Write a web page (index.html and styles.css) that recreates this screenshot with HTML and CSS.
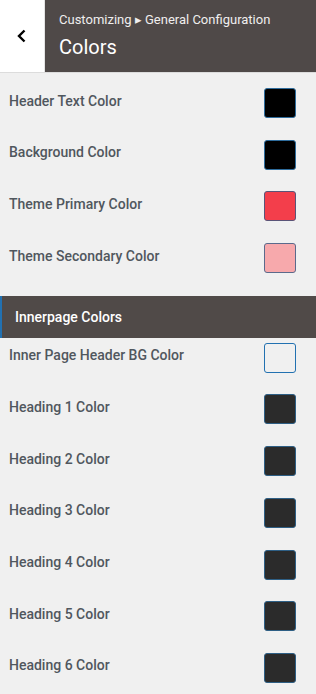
FILE: index.html
```html
<!DOCTYPE html>
<html lang="en">
<head>
    <meta charset="UTF-8">
    <meta name="viewport" content="width=device-width, initial-scale=1.0">
    <title>Colors</title>
    <link rel="stylesheet" href="styles.css">
</head>
<body>

    <!-- Panel header -->
    <div class="panel-head">
        <button type="button" class="back" aria-label="Back">
            <svg width="12" height="14" viewBox="0 0 12 14"><path d="M8.5 1.5 L3 7 L8.5 12.5" fill="none" stroke="#000" stroke-width="2.4"/></svg>
        </button>
        <div class="title">
            <span class="crumb">Customizing &#9656; General Configuration</span>
            <h1>Colors</h1>
        </div>
    </div>

    <div class="controls">
        <div class="row"><span class="label">Header Text Color</span><span class="swatch black"></span></div>
        <div class="row"><span class="label">Background Color</span><span class="swatch black"></span></div>
        <div class="row"><span class="label">Theme Primary Color</span><span class="swatch primary"></span></div>
        <div class="row"><span class="label">Theme Secondary Color</span><span class="swatch secondary"></span></div>

        <!-- Inner page group -->
        <h3 class="section">Innerpage Colors</h3>

        <div class="row first"><span class="label">Inner Page Header BG Color</span><span class="swatch empty"></span></div>
        <div class="row"><span class="label">Heading 1 Color</span><span class="swatch dark"></span></div>
        <div class="row"><span class="label">Heading 2 Color</span><span class="swatch dark"></span></div>
        <div class="row"><span class="label">Heading 3 Color</span><span class="swatch dark"></span></div>
        <div class="row"><span class="label">Heading 4 Color</span><span class="swatch dark"></span></div>
        <div class="row"><span class="label">Heading 5 Color</span><span class="swatch dark"></span></div>
        <div class="row"><span class="label">Heading 6 Color</span><span class="swatch dark"></span></div>
    </div>

</body>
</html>
```

FILE: styles.css
```css
body {
    margin: 0;
    background: #f0f0f0;
    font-family: Roboto, "Liberation Sans", sans-serif;
}

.panel-head {
    display: flex;
    height: 72px;
    border-bottom: 1px solid #dcdcdc;
}

.back {
    width: 45px;
    border: none;
    border-right: 1px solid #e4e4e4;
    background: #fff;
    padding: 0;
    display: flex;
    align-items: center;
    justify-content: center;
}

.title {
    flex: 1;
    background: #4f4948;
    padding: 12px 0 0 14px;
    color: #fff;
}

.crumb {
    display: block;
    font-size: 13px;
    line-height: 16px;
    color: #f0eeee;
}

.title h1 {
    margin: 7px 0 0;
    font-size: 20px;
    font-weight: 400;
    line-height: 24px;
}

.controls {
    padding: 15px 20px 0 9px;
}

.row {
    display: flex;
    align-items: center;
    justify-content: space-between;
    height: 30px;
    margin-bottom: 21.7px;
}

.label {
    font-size: 14px;
    font-weight: 500;
    color: #50575e;
    padding-bottom: 5px;
}

.swatch {
    width: 30px;
    height: 28px;
    border: 1px solid #2e6c9c;
    border-radius: 3px;
}

.black { background: #000; }
.primary { background: #f33e4b; border-color: #5a5478; }
.secondary { background: #f7a9ac; border-color: #5b6a8c; }
.empty { background: #f0f0f0; border-color: #2271b1; }
.dark { background: #2b2b2b; border-color: #2e5f85; }

.section {
    margin: 0 -20px 6px -9px;
    height: 42px;
    line-height: 42px;
    padding-left: 13px;
    background: #504a48;
    border-left: 2px solid #2271b1;
    color: #fff;
    font-size: 14px;
    font-weight: 500;
    position: relative;
    top: 1px;
}

.row.first {
    margin-top: 0;
}
```
